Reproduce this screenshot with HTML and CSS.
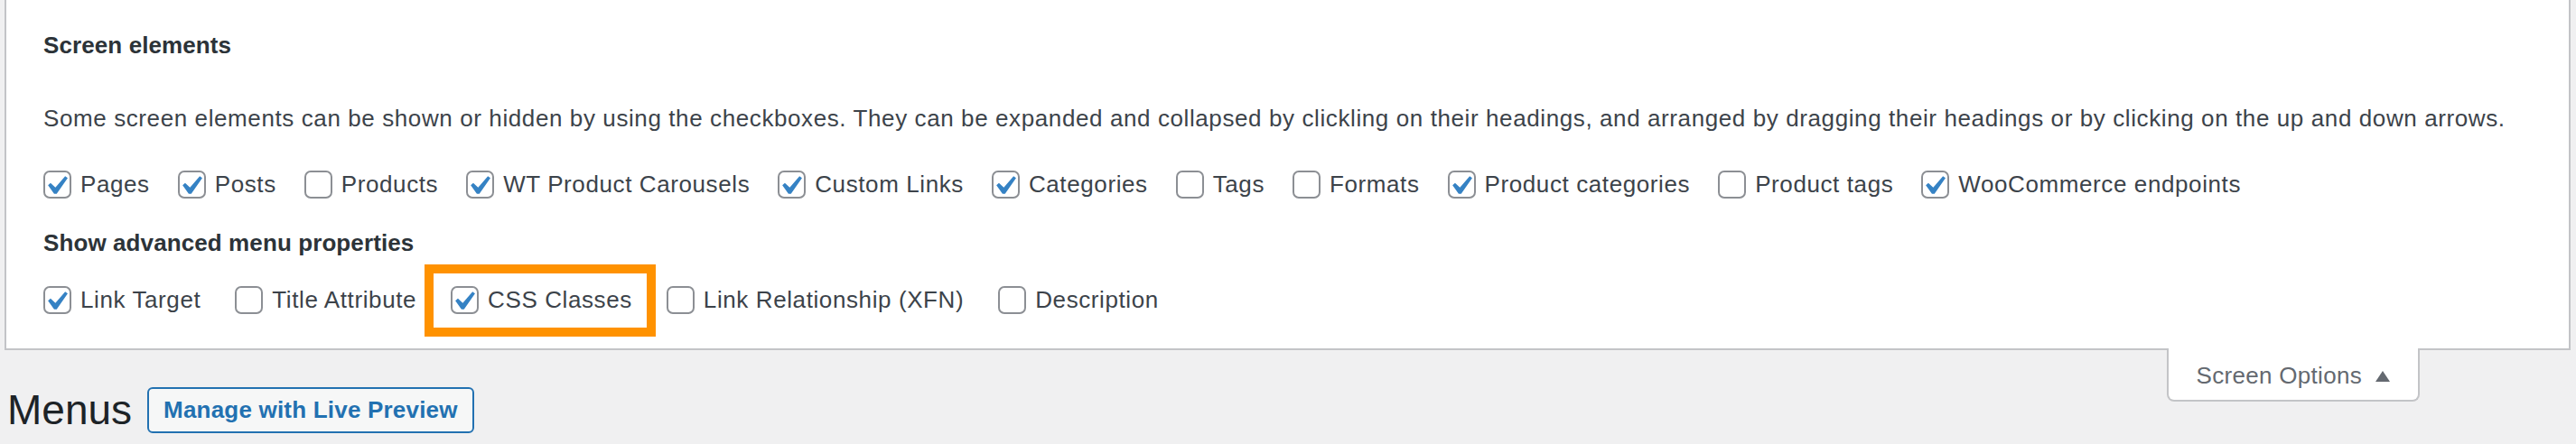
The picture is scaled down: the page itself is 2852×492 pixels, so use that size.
FILE: index.html
```html
<!DOCTYPE html>
<html>
<head>
    <title>Menus</title>
    <link rel="stylesheet" href="styles.css">
</head>
<body>
    <div class="screen-meta">
        <h5 class="prefs-title">Screen elements</h5>
        <p class="prefs-help">Some screen elements can be shown or hidden by using the checkboxes. They can be expanded and collapsed by clickling on their headings, and arranged by dragging their headings or by clicking on the up and down arrows.</p>
        <div class="prefs-row">
            <label class="pref"><span class="cb"><svg viewBox="0 0 20 20"><path d="M14.83 4.89l1.34.94-5.81 8.38H9.02L5.78 9.67l1.34-1.25 2.57 2.4z"/></svg></span>Pages</label>
            <label class="pref"><span class="cb"><svg viewBox="0 0 20 20"><path d="M14.83 4.89l1.34.94-5.81 8.38H9.02L5.78 9.67l1.34-1.25 2.57 2.4z"/></svg></span>Posts</label>
            <label class="pref"><span class="cb"></span>Products</label>
            <label class="pref"><span class="cb"><svg viewBox="0 0 20 20"><path d="M14.83 4.89l1.34.94-5.81 8.38H9.02L5.78 9.67l1.34-1.25 2.57 2.4z"/></svg></span>WT Product Carousels</label>
            <label class="pref"><span class="cb"><svg viewBox="0 0 20 20"><path d="M14.83 4.89l1.34.94-5.81 8.38H9.02L5.78 9.67l1.34-1.25 2.57 2.4z"/></svg></span>Custom Links</label>
            <label class="pref"><span class="cb"><svg viewBox="0 0 20 20"><path d="M14.83 4.89l1.34.94-5.81 8.38H9.02L5.78 9.67l1.34-1.25 2.57 2.4z"/></svg></span>Categories</label>
            <label class="pref"><span class="cb"></span>Tags</label>
            <label class="pref"><span class="cb"></span>Formats</label>
            <label class="pref"><span class="cb"><svg viewBox="0 0 20 20"><path d="M14.83 4.89l1.34.94-5.81 8.38H9.02L5.78 9.67l1.34-1.25 2.57 2.4z"/></svg></span>Product categories</label>
            <label class="pref"><span class="cb"></span>Product tags</label>
            <label class="pref"><span class="cb"><svg viewBox="0 0 20 20"><path d="M14.83 4.89l1.34.94-5.81 8.38H9.02L5.78 9.67l1.34-1.25 2.57 2.4z"/></svg></span>WooCommerce endpoints</label>
        </div>
        <h5 class="prefs-title prefs-title--advanced">Show advanced menu properties</h5>
        <div class="prefs-row prefs-row--wide">
            <label class="pref"><span class="cb"><svg viewBox="0 0 20 20"><path d="M14.83 4.89l1.34.94-5.81 8.38H9.02L5.78 9.67l1.34-1.25 2.57 2.4z"/></svg></span>Link Target</label>
            <label class="pref"><span class="cb"></span>Title Attribute</label>
            <label class="pref pref--highlight"><span class="cb"><svg viewBox="0 0 20 20"><path d="M14.83 4.89l1.34.94-5.81 8.38H9.02L5.78 9.67l1.34-1.25 2.57 2.4z"/></svg></span>CSS Classes</label>
            <label class="pref"><span class="cb"></span>Link Relationship (XFN)</label>
            <label class="pref"><span class="cb"></span>Description</label>
        </div>
    </div>

    <div class="screen-meta-links">
        <div class="screen-options-toggle">Screen Options <svg class="arrow" viewBox="0 0 16 12"><polygon points="8,0 16,12 0,12"/></svg></div>
    </div>

    <div class="wrap">
        <div class="title-row">
            <h1>Menus</h1>
            <a class="page-title-action" href="#">Manage with Live Preview</a>
        </div>
    </div>
</body>
</html>
```

FILE: styles.css
```css
body {
    margin: 0;
    background-color: #f0f0f1;
    font-family: "Liberation Sans", Arial, sans-serif;
    font-size: 26px;
    color: #3c434a;
}
.screen-meta {
    margin: 0 6px 0 5px;
    padding: 32px 0 34px 41px;
    background: #fff;
    border: 2px solid #c3c4c7;
    border-top: 0;
    letter-spacing: 0.6px;
}
.prefs-title {
    margin: 0;
    font-size: 26px;
    line-height: 36px;
    font-weight: 700;
    letter-spacing: 0.1px;
    color: #2c3338;
}
.prefs-title--advanced {
    margin-top: 27px;
}
.prefs-help {
    margin: 45px 0 0;
    line-height: 36px;
}
.prefs-row {
    display: flex;
    align-items: center;
    gap: 31px;
    height: 40px;
    margin-top: 35px;
}
.prefs-row--wide {
    gap: 38px;
    margin-top: 25px;
}
.pref {
    display: flex;
    align-items: center;
    gap: 10px;
    line-height: 40px;
    position: relative;
}
.cb {
    width: 27px;
    height: 27px;
    border: 2px solid #8c8f94;
    border-radius: 7px;
    background: #fff;
}
.cb svg {
    display: block;
    width: 42px;
    height: 42px;
    margin: -6px 0 0 -9px;
    fill: #3582c4;
}
/* orange annotation round the option */
.pref--highlight::after {
    content: "";
    position: absolute;
    top: -19px;
    bottom: -21px;
    left: -29px;
    right: -26px;
    border: 10px solid #ff9200;
}
.screen-meta-links {
    float: right;
    margin: -2px 173px 0 0;
}
.screen-options-toggle {
    display: flex;
    align-items: center;
    gap: 15px;
    height: 53px;
    padding: 4px 31px 0 31px;
    background: #fff;
    border: 2px solid #c3c4c7;
    border-top: 0;
    border-radius: 0 0 8px 8px;
    color: #646970;
    letter-spacing: 0.3px;
}
.arrow {
    width: 16px;
    height: 12px;
    fill: #646970;
}
.wrap {
    padding: 41px 0 0 8px;
}
.title-row {
    display: flex;
    align-items: center;
}
h1 {
    margin: 0;
    font-size: 46px;
    font-weight: 400;
    line-height: 51px;
    color: #1d2327;
}
.page-title-action {
    margin-left: 17px;
    padding: 8px 16px;
    border: 2px solid #2271b1;
    border-radius: 6px;
    background: #f6f7f7;
    color: #2271b1;
    font-weight: 700;
    line-height: 31px;
    letter-spacing: 0.2px;
    text-decoration: none;
}
```
